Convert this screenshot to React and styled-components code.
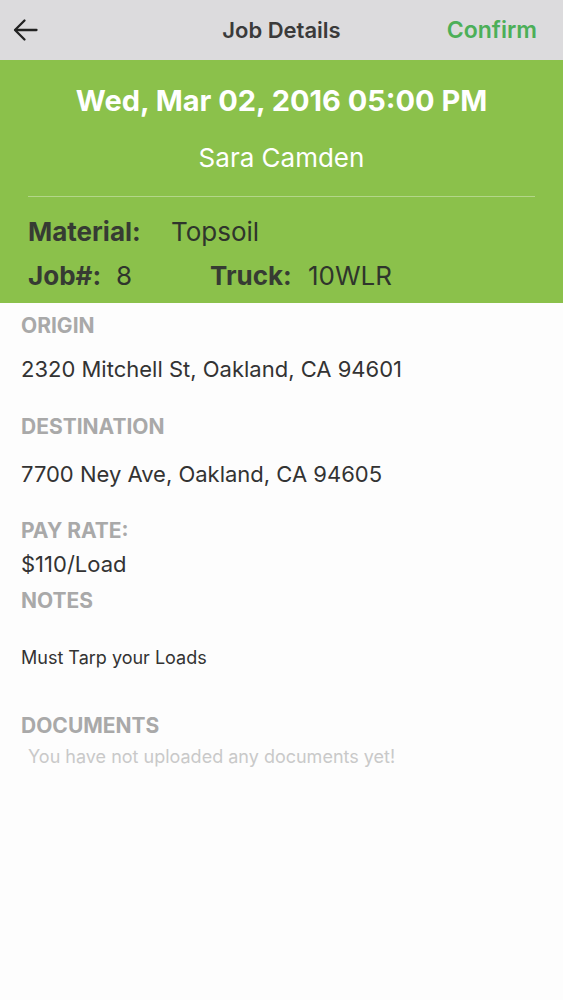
import React from "react";
import styled, { createGlobalStyle } from "styled-components";

const Global = createGlobalStyle`
  html, body { margin: 0; padding: 0; background: #fdfdfd; }
  body { font-family: Inter, Roboto, "Liberation Sans", Arial, sans-serif; -webkit-font-smoothing: antialiased; }
  * { box-sizing: border-box; }
`;

const Page = styled.div`
  width: 563px;
  min-height: 1000px;
  background: #fdfdfd;
`;

const NavBar = styled.header`
  height: 60px;
  background: #dcdbdd;
  display: grid;
  grid-template-columns: 1fr auto 1fr;
  align-items: center;
  padding: 0 12px;
`;

const BackButton = styled.button`
  border: 0;
  background: none;
  padding: 0;
  display: flex;
  align-items: center;
  justify-self: start;
  color: #222;
  cursor: pointer;
`;

const NavTitle = styled.h1`
  margin: 0;
  text-align: center;
  font-size: 22px;
  line-height: 28px;
  font-weight: 600;
  color: #3a3a3a;
`;

const NavAction = styled.button`
  border: 0;
  background: none;
  padding: 0 14px 0 0;
  justify-self: end;
  font-family: inherit;
  font-size: 23px;
  line-height: 28px;
  font-weight: 600;
  color: #4caf58;
`;

const Hero = styled.section`
  background: #8bc14b;
  padding: 23px 28px 11px;
  display: flex;
  flex-direction: column;
`;

const DateLine = styled.div`
  text-align: center;
  color: #fff;
  font-size: 29px;
  font-weight: 700;
  line-height: 36px;
`;

const Customer = styled.div`
  text-align: center;
  color: #fff;
  font-size: 26px;
  font-weight: 400;
  line-height: 32px;
  margin-top: 23px;
  padding-bottom: 22px;
  border-bottom: 1px solid rgba(255, 255, 255, 0.35);
`;

const InfoRow = styled.div`
  display: flex;
  align-items: baseline;
  margin-top: ${(p) => p.$top}px;
  line-height: 32px;
`;

const InfoLabel = styled.span`
  font-size: 26px;
  font-weight: 700;
  color: #363b33;
  width: ${(p) => p.$w}px;
  flex: none;
`;

const InfoValue = styled.span`
  font-size: 26px;
  font-weight: 400;
  color: #2f352c;
  width: ${(p) => (p.$w ? `${p.$w}px` : "auto")};
  flex: none;
`;

const Body = styled.main`
  padding: 10px 21px;
  display: flex;
  flex-direction: column;
`;

const SectionLabel = styled.div`
  font-size: 21px;
  font-weight: 700;
  color: #a9a9a9;
  line-height: 26px;
  margin-top: ${(p) => p.$top || 0}px;
`;

const SectionValue = styled.div`
  font-size: ${(p) => p.$size || 22}px;
  color: #333;
  line-height: ${(p) => (p.$size ? p.$size + 6 : 28)}px;
  margin-top: ${(p) => p.$top || 0}px;
`;

const EmptyNote = styled.div`
  font-size: 18px;
  color: #c9c9c9;
  line-height: 24px;
  padding-left: 7px;
  margin-top: 6px;
`;

const BackIcon = () => (
  <svg width="26" height="24" viewBox="0 0 26 24" fill="none" stroke="#222" strokeWidth="2.3" strokeLinecap="round" strokeLinejoin="round">
    <path d="M24.5 12H3.5" />
    <path d="M12.5 2.5L3 12L12.5 21.5" />
  </svg>
);

export default function App() {
  return (
    <Page>
      <Global />
      <NavBar>
        <BackButton aria-label="Back">
          <BackIcon />
        </BackButton>
        <NavTitle>Job Details</NavTitle>
        <NavAction>Confirm</NavAction>
      </NavBar>
      <Hero>
        <DateLine>Wed, Mar 02, 2016 05:00 PM</DateLine>
        <Customer>Sara Camden</Customer>
        <InfoRow $top={19}>
          <InfoLabel $w={143}>Material:</InfoLabel>
          <InfoValue>Topsoil</InfoValue>
        </InfoRow>
        <InfoRow $top={12}>
          <InfoLabel $w={88}>Job#:</InfoLabel>
          <InfoValue $w={94}>8</InfoValue>
          <InfoLabel $w={98}>Truck:</InfoLabel>
          <InfoValue>10WLR</InfoValue>
        </InfoRow>
      </Hero>
      <Body>
        <SectionLabel>ORIGIN</SectionLabel>
        <SectionValue $top={16}>2320 Mitchell St, Oakland, CA 94601</SectionValue>
        <SectionLabel $top={31}>DESTINATION</SectionLabel>
        <SectionValue $top={20}>7700 Ney Ave, Oakland, CA 94605</SectionValue>
        <SectionLabel $top={30}>PAY RATE:</SectionLabel>
        <SectionValue $top={6}>$110/Load</SectionValue>
        <SectionLabel $top={10}>NOTES</SectionLabel>
        <SectionValue $top={32} $size={18}>Must Tarp your Loads</SectionValue>
        <SectionLabel $top={43}>DOCUMENTS</SectionLabel>
        <EmptyNote>You have not uploaded any documents yet!</EmptyNote>
      </Body>
    </Page>
  );
}
